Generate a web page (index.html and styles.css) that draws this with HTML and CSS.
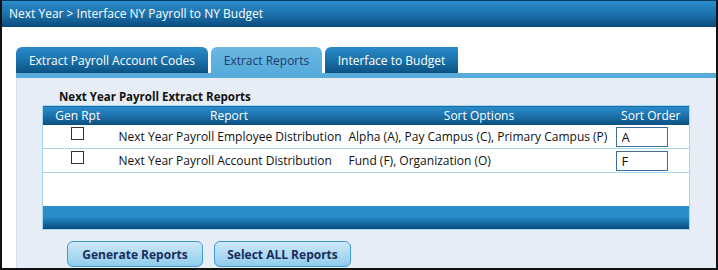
FILE: index.html
```html
<!DOCTYPE html>
<html lang="en">

<head>
    <meta charset="UTF-8">
    <meta name="viewport" content="width=device-width, initial-scale=1.0">
    <title>Interface NY Payroll to NY Budget</title>

    <link rel="stylesheet" href="styles.css">
</head>

<body>
    <div class="frame">
        <div class="page-header">Next Year &gt; Interface NY Payroll to NY Budget</div>

        <div class="tabs">
            <div class="tab tab-codes">Extract Payroll Account Codes</div>
            <div class="tab tab-reports active">Extract Reports</div>
            <div class="tab tab-budget">Interface to Budget</div>
        </div>
        <div class="tab-strip"></div>

        <div class="panel">
            <div class="panel-title">Next Year Payroll Extract Reports</div>

            <table class="reports">
                <colgroup>
                    <col class="col-gen">
                    <col class="col-report">
                    <col class="col-options">
                    <col class="col-order">
                </colgroup>
                <thead>
                    <tr>
                        <th>Gen Rpt</th>
                        <th>Report</th>
                        <th>Sort Options</th>
                        <th>Sort Order</th>
                    </tr>
                </thead>
                <tbody>
                    <tr class="row">
                        <td class="gen"><input type="checkbox" class="check"></td>
                        <td class="name">Next Year Payroll Employee Distribution</td>
                        <td class="options">Alpha (A), Pay Campus (C), Primary Campus (P)</td>
                        <td class="order"><input type="text" class="order-input" value="A"></td>
                    </tr>
                    <tr class="row">
                        <td class="gen"><input type="checkbox" class="check"></td>
                        <td class="name">Next Year Payroll Account Distribution</td>
                        <td class="options">Fund (F), Organization (O)</td>
                        <td class="order"><input type="text" class="order-input" value="F"></td>
                    </tr>
                    <tr class="spacer">
                        <td colspan="4"></td>
                    </tr>
                </tbody>
                <tfoot>
                    <tr>
                        <td colspan="4"></td>
                    </tr>
                </tfoot>
            </table>

            <div class="actions">
                <button class="btn btn-generate">Generate Reports</button>
                <button class="btn btn-select">Select ALL Reports</button>
            </div>
        </div>
    </div>
</body>

</html>
```

FILE: styles.css
```css
body {
    margin: 0;
    font-family: "Open Sans", "Noto Sans", sans-serif;
}

.frame {
    width: 714px;
    height: 267px;
    border: 2px solid #111;
    border-top: 1px solid #0b3c62;
    background-color: #fff;
    overflow: hidden;
}

.page-header {
    height: 26px;
    line-height: 25px;
    padding-left: 7px;
    color: #fff;
    font-size: 12px;
    background: linear-gradient(#2a8dcb, #1a6fa8 55%, #0b4a7a);
}

.tabs {
    display: flex;
    gap: 3px;
    margin: 20px 0 0 14px;
    height: 26px;
}

.tab {
    height: 26px;
    line-height: 27px;
    font-size: 12px;
    color: #fff;
    text-align: center;
    border-radius: 6px 6px 0 0;
    background: linear-gradient(#2a8ccb, #1b72ab 50%, #0c5283);
}

.tab-codes {
    width: 192px;
}

.tab-reports {
    width: 111px;
}

.tab-budget {
    width: 133px;
    border-radius: 6px 0 0 0;
}

.tab.active {
    color: #1d3a6c;
    background: linear-gradient(#6ab8e2, #57acdc);
}

.tab-strip {
    height: 5px;
    margin-left: 14px;
    background-color: #56abdb;
}

.panel {
    height: 190px;
    margin-left: 14px;
    padding: 0 28px 0 25px;
    background-color: #e6edf7;
    border-left: 1px solid #d3dfec;
    box-sizing: border-box;
}

.panel-title {
    padding: 10px 0 0 17px;
    height: 17px;
    line-height: 18px;
    font-size: 11.5px;
    font-weight: bold;
    color: #111;
}

.reports {
    width: 647px;
    border-collapse: collapse;
    table-layout: fixed;
    background-color: #fff;
    border: 1px solid #a5d6ee;
}

.col-gen {
    width: 70px;
}

.col-report {
    width: 233px;
}

.col-options {
    width: 267px;
}

.col-order {
    width: 77px;
}

.reports th {
    height: 19px;
    padding: 0;
    font-size: 12px;
    font-weight: normal;
    color: #fff;
    line-height: 18px;
    background: linear-gradient(#2a8ccb, #1a6ea7 55%, #0b4d7e);
}

.reports td {
    padding: 0;
    font-size: 12px;
    color: #111;
}

.row td {
    height: 23px;
    border-bottom: 1px solid #a5d6ee;
}

.gen {
    text-align: center;
    vertical-align: top;
}

.check {
    appearance: none;
    display: block;
    width: 13px;
    height: 13px;
    margin: 2px auto 0 auto;
    border: 1px solid #333;
    background-color: #fff;
    box-sizing: border-box;
}

.name {
    padding-left: 6px !important;
}

.options {
    padding-left: 3px !important;
}

.order {
    vertical-align: top;
}

.order-input {
    display: block;
    width: 52px;
    height: 20px;
    margin: 2px 0 0 3px;
    padding: 0 0 0 5px;
    border: 1px solid #3f6f98;
    box-sizing: border-box;
    font-family: "Open Sans", sans-serif;
    font-size: 13px;
    color: #111;
}

.spacer td {
    height: 33px;
}

.reports tfoot td {
    height: 23px;
    background: linear-gradient(#2a8ecb 45%, #1a6fa8 70%, #0a4a7a);
}

.actions {
    display: flex;
    gap: 11px;
    margin: 11px 0 0 25px;
}

.btn {
    height: 26px;
    padding: 0;
    font-family: "Open Sans", sans-serif;
    font-size: 12px;
    font-weight: bold;
    color: #1b2c5b;
    border: 1px solid #3f9bd0;
    border-radius: 6px;
    background: linear-gradient(#cde9f7, #8fcdec);
    cursor: pointer;
}

.btn-generate {
    width: 136px;
}

.btn-select {
    width: 137px;
}

.btn:hover {
    background: linear-gradient(#e0f2fb, #a4d8f1);
}
```
